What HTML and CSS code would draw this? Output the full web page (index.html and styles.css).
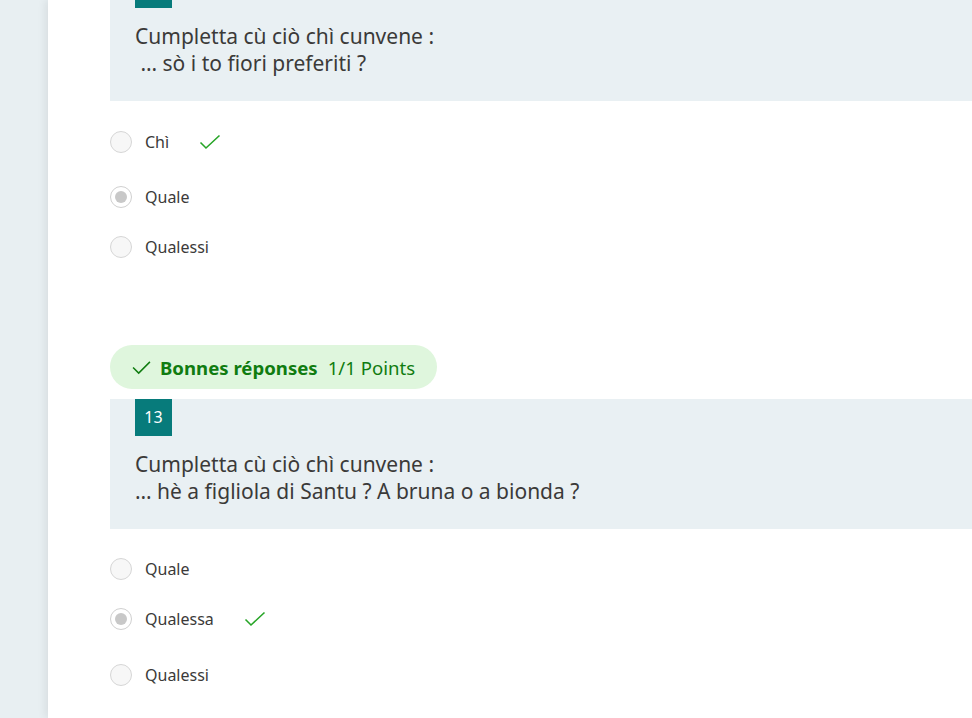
FILE: index.html
```html
<!DOCTYPE html>
<html lang="co">
<head>
<meta charset="utf-8">
<title>Quiz</title>
<link rel="stylesheet" href="styles.css">
</head>
<body>
<div class="page">
  <div class="rail"></div>
  <main class="card">
    <section class="question q-first">
      <div class="q-head">
        <div class="q-num">12</div>
        <p class="q-text">Cumpletta cù ciò chì cunvene :<br>&nbsp;… sò i to fiori preferiti ?</p>
      </div>
      <ul class="options">
        <li class="option correct"><span class="radio"></span><span class="label">Chì</span>
          <svg class="tick" viewBox="0 0 22 16" width="22" height="16"><path d="M1.5 8.5 L7 14 L20.5 1.5" fill="none" stroke="#27a527" stroke-width="1.6"/></svg></li>
        <li class="option"><span class="radio checked"></span><span class="label">Quale</span></li>
        <li class="option"><span class="radio"></span><span class="label">Qualessi</span></li>
      </ul>
    </section>

    <section class="question">
      <div class="result">
        <svg class="result-tick" viewBox="0 0 20 16" width="19" height="15"><path d="M1 8 L7 14 L19 2" fill="none" stroke="#107c10" stroke-width="1.6"/></svg>
        <span class="result-title">Bonnes réponses</span>
        <span class="result-points">1/1 Points</span>
      </div>
      <div class="q-head">
        <div class="q-num">13</div>
        <p class="q-text">Cumpletta cù ciò chì cunvene :<br>… hè a figliola di Santu ? A bruna o a bionda ?</p>
      </div>
      <ul class="options">
        <li class="option"><span class="radio"></span><span class="label">Quale</span></li>
        <li class="option correct"><span class="radio checked"></span><span class="label">Qualessa</span>
          <svg class="tick" viewBox="0 0 22 16" width="22" height="16"><path d="M1.5 8.5 L7 14 L20.5 1.5" fill="none" stroke="#27a527" stroke-width="1.6"/></svg></li>
        <li class="option"><span class="radio"></span><span class="label">Qualessi</span></li>
      </ul>
    </section>
  </main>
</div>
</body>
</html>
```
FILE: styles.css
```css
* { box-sizing: border-box; }
html, body { margin: 0; padding: 0; }
body {
  background: #e8eff2;
  font-family: "Noto Sans", "Open Sans", sans-serif;
  color: #323130;
  overflow: hidden;
  height: 718px;
}
.page {
  display: flex;
  height: 718px;
}
.rail {
  width: 48px;
  flex: none;
  background: #e8eff2;
}
.card {
  flex: 1;
  background: #fff;
  padding-left: 62px;
  box-shadow: -3px 0 8px rgba(0, 0, 0, 0.07);
}
.q-first {
  margin-top: -29px;
}
.q-head {
  background: #e9f0f3;
  padding: 0 0 24px 25px;
}
.q-num {
  width: 37px;
  height: 37px;
  background: #077b7b;
  color: #fff;
  font-size: 16px;
  line-height: 37px;
  text-align: center;
}
.q-text {
  margin: 15px 0 0;
  font-size: 21px;
  line-height: 27px;
  color: #3b3a39;
}
.options {
  list-style: none;
  margin: 0;
  padding: 14px 0 0;
}
.option {
  display: flex;
  align-items: center;
  height: 50px;
  font-size: 16px;
}
.option:first-child {
  padding-top: 1px;
}
.option.correct {
  height: 57px;
  padding-bottom: 5px;
}
.radio {
  width: 22px;
  height: 22px;
  border-radius: 50%;
  border: 1px solid #d6d6d6;
  background: #f7f7f7;
  margin-right: 13px;
  flex: none;
  display: flex;
  align-items: center;
  justify-content: center;
}
.radio.checked {
  background: #fff;
  border: 1.5px solid #d0d0d0;
}
.radio.checked::after {
  content: "";
  width: 12px;
  height: 12px;
  border-radius: 50%;
  background: #c8c8c8;
}
.label {
  color: #3b3a39;
}
.tick {
  margin-left: 30px;
}
.result {
  margin-top: 73px;
  display: inline-flex;
  align-items: center;
  height: 44px;
  padding: 0 22px 0 22px;
  background: #dff6dd;
  border-radius: 22px;
  color: #107c10;
  font-size: 18.6px;
}
.result-tick {
  margin-right: 9px;
}
.result-title {
  font-weight: 700;
  margin-right: 10px;
}
.result + .q-head {
  margin-top: 10px;
}
```
